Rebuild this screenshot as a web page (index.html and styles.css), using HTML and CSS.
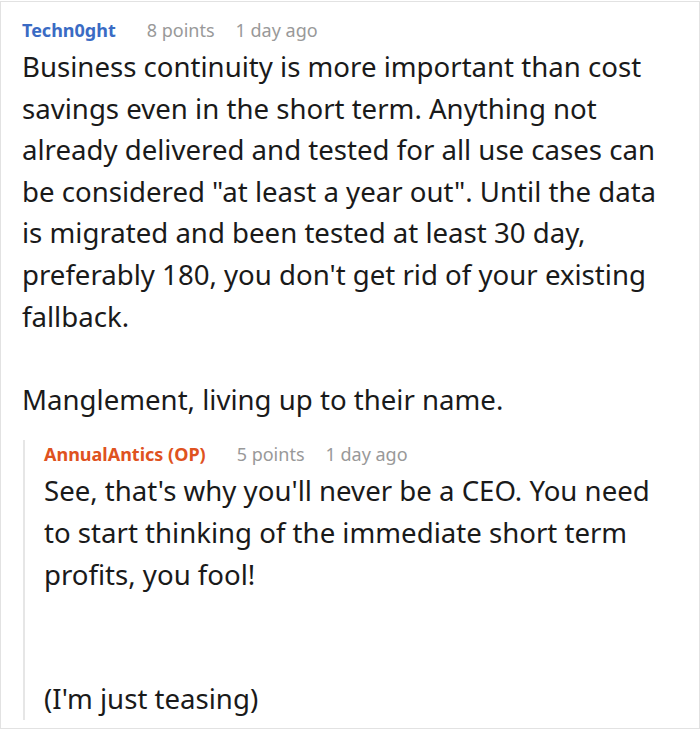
FILE: index.html
```html
<!DOCTYPE html>
<html lang="en">
<head>
<meta charset="utf-8">
<title>Comment</title>
<link rel="stylesheet" href="styles.css">
</head>
<body>
<div class="frame">
  <div class="comment">
    <div class="meta">
      <span class="author">Techn0ght</span>
      <span class="points">8 points</span>
      <span class="time">1 day ago</span>
    </div>
    <div class="text">
      <p>Business continuity is more important than cost savings even in the short term. Anything not already delivered and tested for all use cases can be considered "at least a year out". Until the data is migrated and been tested at least 30 day, preferably 180, you don't get rid of your existing fallback.<br><br>Manglement, living up to their name.</p>
    </div>
    <div class="reply">
      <div class="meta meta-reply">
        <span class="author op">AnnualAntics (OP)</span>
        <span class="points">5 points</span>
        <span class="time">1 day ago</span>
      </div>
      <div class="text">
        <p>See, that's why you'll never be a CEO. You need to start thinking of the immediate short term profits, you fool!<br><br><br>(I'm just teasing)</p>
      </div>
    </div>
  </div>
</div>
</body>
</html>
```

FILE: styles.css
```css
html, body {
  margin: 0;
  padding: 0;
  background: #ffffff;
}

body {
  font-family: "Noto Sans", "Open Sans", "DejaVu Sans", sans-serif;
  color: #1a1a1a;
}

.frame {
  width: 700px;
  box-sizing: border-box;
  margin-top: 1px;
  border: 1px solid #e2e2e2;
}

.comment {
  padding: 14px 22px 17px 21px;
}

.meta {
  display: flex;
  align-items: baseline;
  font-size: 18px;
  line-height: 28px;
  color: #999999;
}

.author {
  font-weight: 700;
  color: #3a6bc4;
  margin-right: 31px;
}

.author.op {
  color: #df5220;
}

.points {
  margin-right: 21px;
}

.text p {
  margin: 0;
  font-size: 27.6px;
  line-height: 41.6px;
}

.comment > .text {
  margin-top: 2px;
}

.reply {
  margin-top: 30px;
  margin-left: 1px;
  margin-right: 20px;
  border-left: 2px solid #e6e6e6;
  padding-left: 19px;
}

.meta-reply {
  margin-top: -10px;
}

.reply .text {
  margin-top: 2px;
  margin-bottom: -9px;
}
```
